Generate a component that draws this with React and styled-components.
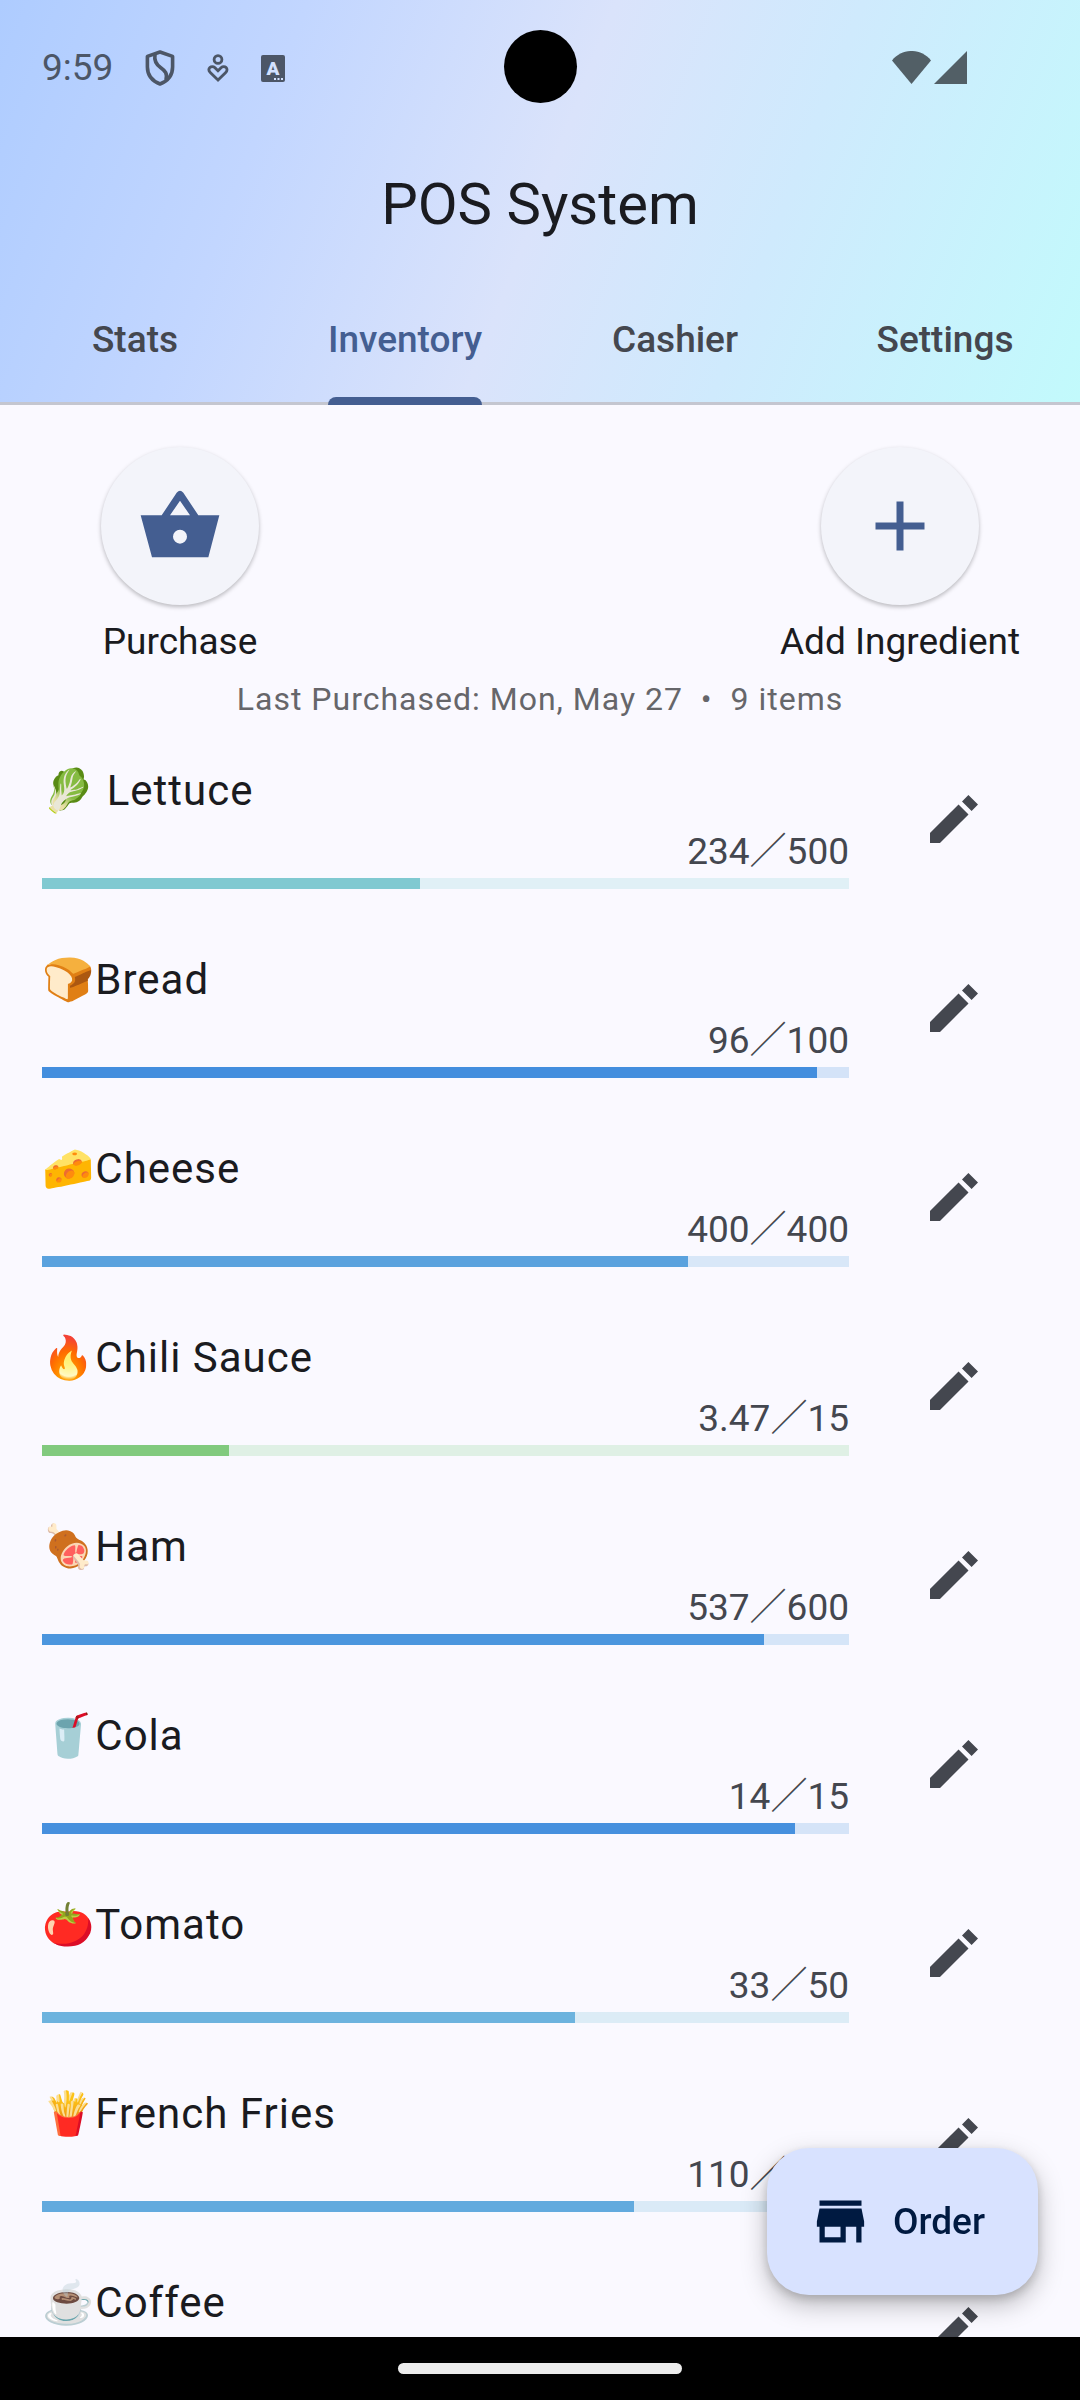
import React from "react";
import styled, { createGlobalStyle } from "styled-components";

const color = {
  surface: "#faf9ff",
  card: "#f3f4fa",
  ink: "#1a1b20",
  muted: "#44474f",
  faint: "#66666a",
  primary: "#445e91",
  container: "#d8e2ff",
  onContainer: "#001a41",
  outline: "#c4c6d0",
};

const Global = createGlobalStyle`
  * { box-sizing: border-box; }
  body {
    margin: 0;
    background: ${color.surface};
    color: ${color.ink};
    font-family: Roboto, "Noto Sans CJK TC", "Noto Color Emoji", sans-serif;
  }
  button {
    font: inherit;
    color: inherit;
    border: 0;
    padding: 0;
    background: none;
    cursor: pointer;
  }
  svg { display: block; flex: none; }
`;

const Screen = styled.div`
  display: flex;
  flex-direction: column;
  height: 100vh;
  overflow: hidden;
`;

const Header = styled.header`
  flex: none;
  background: linear-gradient(111deg, #aeccff 0%, #c2d6ff 25%, #dae3fb 50%, #cfeafd 70%, #c2fafc 100%);
  border-bottom: 3px solid ${color.outline};
`;

const StatusBar = styled.div`
  display: grid;
  grid-template-columns: 1fr auto 1fr;
  align-items: center;
  height: 136px;
  padding: 0 42px;
`;

const StatusGroup = styled.div`
  display: flex;
  align-items: center;
  gap: 32px;
  color: #4c5667;
`;

const TrailingGroup = styled(StatusGroup)`
  justify-content: flex-end;
  padding-right: 70px;
  color: #525f66;
`;

const Clock = styled.time`
  font-size: 37px;
  line-height: 42px;
`;

const Camera = styled.div`
  width: 73px;
  height: 73px;
  margin-bottom: 4px;
  border-radius: 50%;
  background: #000;
`;

const Title = styled.h1`
  margin: 0;
  text-align: center;
  font-size: 58px;
  font-weight: 400;
  line-height: 136px;
`;

const Tabs = styled.nav`
  display: grid;
  grid-template-columns: repeat(4, 1fr);
  margin: 8px 0 -3px;
`;

const Tab = styled.button`
  display: flex;
  justify-content: center;
  height: 125px;
  font-size: 37px;
  font-weight: 500;
  color: ${(p) => (p.$active ? color.primary : color.muted)};
`;

const TabLabel = styled.span`
  display: flex;
  flex-direction: column;
  height: 125px;
  line-height: 120px;
  &::after {
    content: "";
    height: 8px;
    margin-top: -3px;
    border-radius: 8px 8px 0 0;
    background: ${(p) => (p.$active ? color.primary : "transparent")};
  }
`;

const Content = styled.main`
  flex: 1;
  min-height: 0;
  overflow: hidden;
`;

const Actions = styled.div`
  display: grid;
  grid-template-columns: repeat(3, 1fr);
  justify-items: center;
  padding-top: 42px;
`;

const Action = styled.button`
  display: flex;
  flex-direction: column;
  align-items: center;
  gap: 10px;
  font-size: 37px;
  line-height: 53px;
  white-space: nowrap;
  &:last-child { grid-column: 3; }
`;

const ActionDisc = styled.span`
  display: grid;
  place-items: center;
  width: 158px;
  height: 158px;
  border-radius: 50%;
  background: ${color.card};
  color: ${color.primary};
  box-shadow: 0 2px 4px rgba(0, 0, 0, 0.26);
`;

const Summary = styled.p`
  margin: 10px 0 4px;
  text-align: center;
  font-size: 32px;
  line-height: 42px;
  letter-spacing: 1px;
  color: ${color.faint};
`;

const List = styled.ul`
  list-style: none;
  margin: 0;
  padding: 0;
`;

const Row = styled.li`
  display: flex;
  align-items: center;
  gap: 42px;
  height: 189px;
  padding: 0 63px 0 42px;
`;

const Stock = styled.div`
  flex: 1;
  align-self: flex-start;
  min-width: 0;
  padding-top: 35px;
`;

const Name = styled.div`
  font-size: 42px;
  line-height: 63px;
  letter-spacing: 1px;
  white-space: pre;
`;

const Amount = styled.div`
  margin-top: 4px;
  text-align: right;
  font-size: 37px;
  line-height: 52px;
  color: ${color.muted};
`;

const Meter = styled.progress`
  display: block;
  appearance: none;
  width: 100%;
  height: 11px;
  border: 0;
  background: ${(p) => p.$track};
  &::-webkit-progress-bar { background: ${(p) => p.$track}; }
  &::-webkit-progress-value { background: ${(p) => p.$fill}; }
`;

const EditButton = styled.button`
  display: grid;
  place-items: center;
  width: 126px;
  height: 126px;
  color: ${color.muted};
`;

const Order = styled.button`
  position: fixed;
  right: 42px;
  bottom: 105px;
  display: flex;
  align-items: center;
  gap: 21px;
  height: 147px;
  padding: 0 53px 0 42px;
  border-radius: 42px;
  background: ${color.container};
  color: ${color.onContainer};
  font-size: 37px;
  font-weight: 500;
  box-shadow: 0 10px 26px rgba(0, 0, 0, 0.26), 0 4px 10px rgba(0, 0, 0, 0.16);
`;

const SystemBar = styled.footer`
  flex: none;
  display: grid;
  place-items: center;
  height: 63px;
  background: #000;
`;

const HomeHandle = styled.div`
  width: 284px;
  height: 11px;
  border-radius: 6px;
  background: #ececec;
`;

const items = [
  { emoji: "🥬", name: " Lettuce", left: "234", total: "500", ratio: 0.468, fill: "#80c9d1", track: "#e0f0f6" },
  { emoji: "🍞", name: "Bread", left: "96", total: "100", ratio: 0.96, fill: "#438ede", track: "#d4e3f8" },
  { emoji: "🧀", name: "Cheese", left: "400", total: "400", ratio: 0.8, fill: "#5aa2de", track: "#d8e7f8" },
  { emoji: "🔥", name: "Chili Sauce", left: "3.47", total: "15", ratio: 0.2313, fill: "#81ca7e", track: "#dff0e5" },
  { emoji: "🍖", name: "Ham", left: "537", total: "600", ratio: 0.895, fill: "#4b96de", track: "#d5e5f8" },
  { emoji: "🥤", name: "Cola", left: "14", total: "15", ratio: 0.933, fill: "#4690de", track: "#d5e4f8" },
  { emoji: "🍅", name: "Tomato", left: "33", total: "50", ratio: 0.66, fill: "#6cb3de", track: "#dcecf6" },
  { emoji: "🍟", name: "French Fries", left: "110", total: "150", ratio: 0.733, fill: "#62aade", track: "#daeaf7" },
  { emoji: "☕", name: "Coffee" },
];

const ShieldIcon = () => (
  <svg width="30" height="36" viewBox="0 0 30 36" fill="none" stroke="currentColor" strokeWidth="3.6" strokeLinejoin="round">
    <path d="M15 2 2.4 6.4V17c0 8 5 14 12.6 17 7.6-3 12.6-9 12.6-17V6.4Z" />
    <path d="M10 4.5c-1 6 .5 9.5 5.500 13 5 3.500 7 6 5.500 12.500" />
  </svg>
);

const CareIcon = () => (
  <svg width="22" height="28" viewBox="0 0 22 28" fill="none" stroke="currentColor" strokeWidth="2.8">
    <circle cx="11" cy="5.5" r="3.9" />
    <path d="m11 26-7.5-7.2c-2-2-1.8-4-.6-5.2 1.3-1.3 3.5-1.3 4.800 0L11 16.800l3.300-3.200c1.300-1.300 3.500-1.300 4.800 0 1.200 1.200 1.400 3.200-.6 5.200Z" />
  </svg>
);

const LetterIcon = () => (
  <svg width="24" height="27" viewBox="0 0 24 27">
    <rect width="24" height="27" rx="2" fill="currentColor" />
    <text x="12" y="20" textAnchor="middle" fontFamily="Roboto, sans-serif" fontWeight="900" fontSize="19" fill="#d3e1ff">A</text>
    <path d="M13 23h2v2h-2zM16.500 23h2v2h-2zM20 23h2v2h-2z" fill="#d3e1ff" />
  </svg>
);

const SignalIcons = () => (
  <svg width="76" height="34" viewBox="0 0 76 34" fill="currentColor">
    <path d="M0 9.500C10-3.200 29-3.200 39 9.500L19.500 33Z" />
    <path d="M75 0v33H42Z" />
  </svg>
);

const BasketIcon = () => (
  <svg width="84" height="84" viewBox="-8 -20 252 252" fill="currentColor">
    <path
      fillRule="evenodd"
      d="M0 74H63L108 6q10-12 20 0L173 74H236L203 200H34ZM88 74H148L118 30ZM118 117a21 21 0 1 0 0 42 21 21 0 0 0 0-42Z"
    />
  </svg>
);

const AddIcon = () => (
  <svg width="84" height="84" viewBox="0 0 24 24" fill="currentColor">
    <path d="M19 13h-6v6h-2v-6H5v-2h6V5h2v6h6v2z" />
  </svg>
);

const EditIcon = () => (
  <svg width="64" height="64" viewBox="0 0 24 24" fill="currentColor">
    <path d="M3 17.250V21h3.750L17.440 10.310l-3.750-3.750L3 17.250zM21 6.600 17.400 3l-2.400 2.400 3.600 3.600Z" />
  </svg>
);

const StoreIcon = () => (
  <svg width="63" height="63" viewBox="0 0 24 24" fill="currentColor">
    <path d="M20 4H4v2h16V4zm1 10v-2l-1-5H4l-1 5v2h1v6h10v-6h4v6h2v-6h1zm-9 4H6v-4h6v4z" />
  </svg>
);

const tabs = ["Stats", "Inventory", "Cashier", "Settings"];

function StockRow({ item }) {
  return (
    <Row>
      <Stock>
        <Name>{item.emoji + item.name}</Name>
        {item.total && (
          <>
            <Amount>{item.left}／{item.total}</Amount>
            <Meter
              aria-label={item.name.trim()}
              value={item.ratio}
              max={1}
              $fill={item.fill}
              $track={item.track}
            />
          </>
        )}
      </Stock>
      <EditButton aria-label={`Edit ${item.name.trim()}`}>
        <EditIcon />
      </EditButton>
    </Row>
  );
}

export default function App() {
  const [active, setActive] = React.useState("Inventory");
  return (
    <Screen>
      <Global />
      <Header>
        <StatusBar>
          <StatusGroup>
            <Clock>9:59</Clock>
            <ShieldIcon />
            <CareIcon />
            <LetterIcon />
          </StatusGroup>
          <Camera />
          <TrailingGroup>
            <SignalIcons />
          </TrailingGroup>
        </StatusBar>
        <Title>POS System</Title>
        <Tabs>
          {tabs.map((tab) => (
            <Tab key={tab} $active={tab === active} onClick={() => setActive(tab)}>
              <TabLabel $active={tab === active}>{tab}</TabLabel>
            </Tab>
          ))}
        </Tabs>
      </Header>
      <Content>
        <Actions>
          <Action>
            <ActionDisc><BasketIcon /></ActionDisc>
            Purchase
          </Action>
          <Action>
            <ActionDisc><AddIcon /></ActionDisc>
            Add Ingredient
          </Action>
        </Actions>
        <Summary>Last Purchased: Mon, May 27&nbsp; •&nbsp; 9 items</Summary>
        <List>
          {items.map((item) => (
            <StockRow key={item.name} item={item} />
          ))}
        </List>
      </Content>
      <Order>
        <StoreIcon />
        Order
      </Order>
      <SystemBar>
        <HomeHandle />
      </SystemBar>
    </Screen>
  );
}
